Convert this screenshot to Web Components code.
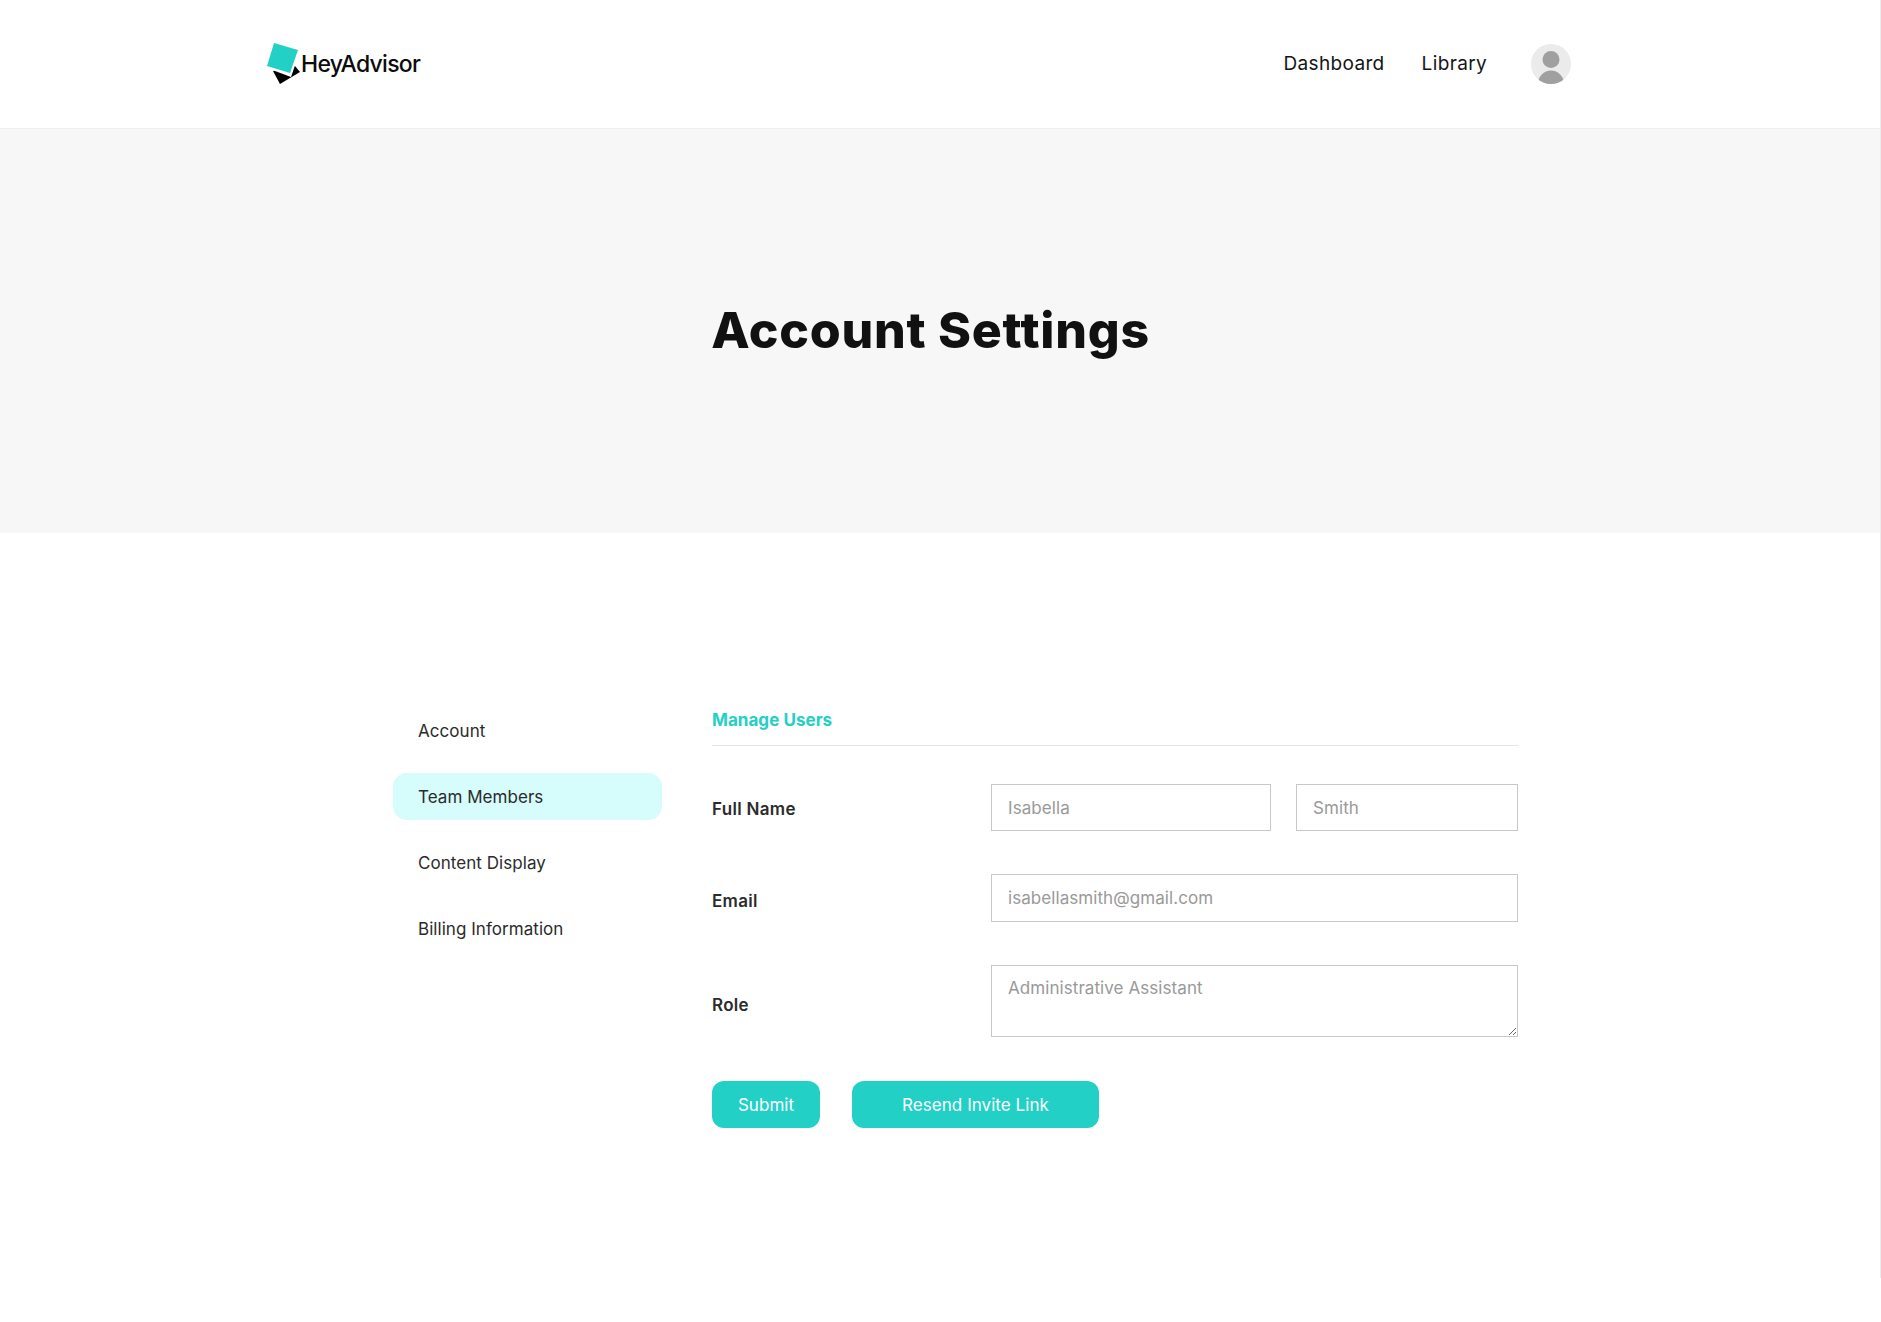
<!DOCTYPE html>
<html lang="en">
<head>
<meta charset="utf-8">
<title>Account Settings</title>
<style>
    html, body { margin: 0; background: #fff; }
    body { font-family: Inter, "Open Sans", sans-serif; color: #222; border-right: 1px solid #ececec; }
</style>
</head>
<body>
<hey-header>
    <hey-nav-link>Dashboard</hey-nav-link>
    <hey-nav-link>Library</hey-nav-link>
</hey-header>
<hey-hero>Account Settings</hey-hero>
<settings-page>
    <side-menu slot="menu">
        <menu-item>Account</menu-item>
        <menu-item active>Team Members</menu-item>
        <menu-item>Content Display</menu-item>
        <menu-item>Billing Information</menu-item>
    </side-menu>
    <user-form slot="form">
        <form-row label="Full Name" top="15">
            <text-field placeholder="Isabella" style="flex: 0 0 280px"></text-field>
            <text-field placeholder="Smith" style="flex: 1"></text-field>
        </form-row>
        <form-row label="Email" top="17">
            <text-field placeholder="isabellasmith@gmail.com" style="flex: 1; height: 48px"></text-field>
        </form-row>
        <form-row label="Role" top="30" style="margin-bottom: 44px">
            <text-field multiline placeholder="Administrative Assistant" style="flex: 1; height: 72px"></text-field>
        </form-row>
        <form-actions>
            <hey-button style="width: 108px">Submit</hey-button>
            <hey-button style="width: 247px">Resend Invite Link</hey-button>
        </form-actions>
    </user-form>
</settings-page>

<script>
class heyHeader extends HTMLElement {
    constructor() {
        super();
        this.attachShadow({ mode: "open" });
        this.shadowRoot.innerHTML = `
        <style>
            :host{
                display: flex;
                align-items: center;
                height: 128px;
                padding: 0 309px 0 267px;
                border-bottom: 1px solid #eeeeee;
                background: #fff;
            }
            .logo{
                display: flex;
                align-items: center;
                margin-right: auto;
                font-size: 23px;
                font-weight: 500;
                letter-spacing: -0.75px;
                color: #0c0c0c;
            }
            svg{ display: block; }
            nav{ display: flex; gap: 37px; margin-right: 44px; padding-bottom: 2px; }
        </style>
        <div class="logo">
            <svg width="34" height="42" viewBox="0 0 34 42">
                <polygon points="6,28 13,41 33,29 28,23" fill="#000"/>
                <polygon points="7,0 33,8 24,34 0,25" fill="#fff"/>
                <polygon points="7,0 31,7 23,30 0,23" fill="#22d0c6"/>
            </svg>
            <span>HeyAdvisor</span>
        </div>
        <nav><slot></slot></nav>
        <svg width="40" height="40" viewBox="0 0 40 40">
            <defs><clipPath id="av"><circle cx="20" cy="20" r="20"/></clipPath></defs>
            <circle cx="20" cy="20" r="20" fill="#ebebeb"/>
            <g clip-path="url(#av)" fill="#a0a0a0">
                <ellipse cx="20" cy="15.5" rx="8.5" ry="8.5"/>
                <ellipse cx="20" cy="40" rx="13" ry="13.5"/>
            </g>
        </svg>
        `;
    }
}
customElements.define("hey-header", heyHeader);

class heyNavLink extends HTMLElement {
    constructor() {
        super();
        this.attachShadow({ mode: "open" });
        this.shadowRoot.innerHTML = `
        <style>
            :host{
                display: block;
                font-size: 19px;
                letter-spacing: 0.35px;
                color: #141414;
            }
        </style>
        <slot></slot>
        `;
    }
}
customElements.define("hey-nav-link", heyNavLink);

class heyHero extends HTMLElement {
    constructor() {
        super();
        this.attachShadow({ mode: "open" });
        this.shadowRoot.innerHTML = `
        <style>
            :host{
                display: flex;
                justify-content: center;
                align-items: center;
                box-sizing: border-box;
                height: 404px;
                padding: 0 19px 2px 0;
                background: #f7f7f7;
            }
            h1{
                margin: 0;
                font-size: 50px;
                font-weight: 800;
                letter-spacing: 0.75px;
                color: #111;
            }
        </style>
        <h1><slot></slot></h1>
        `;
    }
}
customElements.define("hey-hero", heyHero);

class settingsPage extends HTMLElement {
    constructor() {
        super();
        this.attachShadow({ mode: "open" });
        this.shadowRoot.innerHTML = `
        <style>
            :host{
                display: flex;
                gap: 50px;
                padding: 163px 362px 150px 393px;
            }
            .menu{ flex: 0 0 269px; }
            .form{ flex: 1; padding-top: 12px; }
        </style>
        <div class="menu"><slot name="menu"></slot></div>
        <div class="form"><slot name="form"></slot></div>
        `;
    }
}
customElements.define("settings-page", settingsPage);

class sideMenu extends HTMLElement {
    constructor() {
        super();
        this.attachShadow({ mode: "open" });
        this.shadowRoot.innerHTML = `
        <style>
            :host{
                display: flex;
                flex-direction: column;
                gap: 19px;
                padding-top: 11px;
            }
        </style>
        <slot></slot>
        `;
    }
}
customElements.define("side-menu", sideMenu);

class menuItem extends HTMLElement {
    constructor() {
        super();
        this.attachShadow({ mode: "open" });
        this.shadowRoot.innerHTML = `
        <style>
            :host{
                display: flex;
                align-items: center;
                height: 47px;
                padding-left: 25px;
                border-radius: 14px;
                font-size: 17px;
                letter-spacing: 0.05px;
                color: #2b2b2b;
            }
            :host([active]){ background: #d6fcfc; }
        </style>
        <slot></slot>
        `;
    }
}
customElements.define("menu-item", menuItem);

class userForm extends HTMLElement {
    constructor() {
        super();
        this.attachShadow({ mode: "open" });
        this.shadowRoot.innerHTML = `
        <style>
            :host{ display: block; }
            h2{
                margin: 0 0 38px;
                padding: 0 0 13px 0;
                border-bottom: 1px solid #e5e5e5;
                font-size: 17px;
                line-height: 24px;
                font-weight: 700;
                letter-spacing: 0.05px;
                color: #22d0c6;
            }
        </style>
        <h2>Manage Users</h2>
        <slot></slot>
        `;
    }
}
customElements.define("user-form", userForm);

class formRow extends HTMLElement {
    constructor() {
        super();
        this.attachShadow({ mode: "open" });
        this.shadowRoot.innerHTML = `
        <style>
            :host{
                display: flex;
                margin-bottom: 43px;
            }
            label{
                flex: 0 0 279px;
                box-sizing: border-box;
                font-size: 17px;
                line-height: 20px;
                font-weight: 600;
                letter-spacing: 0.3px;
                color: #2b2b2b;
            }
            .fields{ flex: 1; display: flex; gap: 25px; }
        </style>
        <label></label>
        <div class="fields"><slot></slot></div>
        `;
    }
    connectedCallback() {
        const label = this.shadowRoot.querySelector("label");
        label.textContent = this.getAttribute("label");
        label.style.paddingTop = this.getAttribute("top") + "px";
    }
}
customElements.define("form-row", formRow);

class textField extends HTMLElement {
    constructor() {
        super();
        this.attachShadow({ mode: "open" });
    }
    connectedCallback() {
        const text = this.getAttribute("placeholder");
        const control = this.hasAttribute("multiline")
            ? `<textarea placeholder="${text}"></textarea>`
            : `<input type="text" placeholder="${text}">`;
        this.shadowRoot.innerHTML = `
        <style>
            :host{ display: block; height: 47px; min-width: 0; }
            input, textarea{
                display: block;
                width: 100%;
                height: 100%;
                box-sizing: border-box;
                margin: 0;
                padding: 0 15px 0 16px;
                border: 1px solid #c8c8c8;
                border-radius: 0;
                outline: none;
                background: #fff;
                font-family: Inter, "Open Sans", sans-serif;
                font-size: 17px;
                letter-spacing: 0.07px;
                color: #222;
            }
            textarea{ padding-top: 12px; line-height: 21px; resize: vertical; }
            ::placeholder{ color: #999; opacity: 1; }
        </style>
        ${control}
        `;
    }
}
customElements.define("text-field", textField);

class formActions extends HTMLElement {
    constructor() {
        super();
        this.attachShadow({ mode: "open" });
        this.shadowRoot.innerHTML = `
        <style>
            :host{ display: flex; gap: 32px; }
        </style>
        <slot></slot>
        `;
    }
}
customElements.define("form-actions", formActions);

class heyButton extends HTMLElement {
    constructor() {
        super();
        this.attachShadow({ mode: "open" });
        this.shadowRoot.innerHTML = `
        <style>
            :host{
                display: flex;
                justify-content: center;
                align-items: center;
                height: 47px;
                border-radius: 12px;
                background: #22d0c6;
                font-size: 17px;
                letter-spacing: 0.05px;
                color: #fff;
            }
        </style>
        <slot></slot>
        `;
    }
}
customElements.define("hey-button", heyButton);
</script>
</body>
</html>
